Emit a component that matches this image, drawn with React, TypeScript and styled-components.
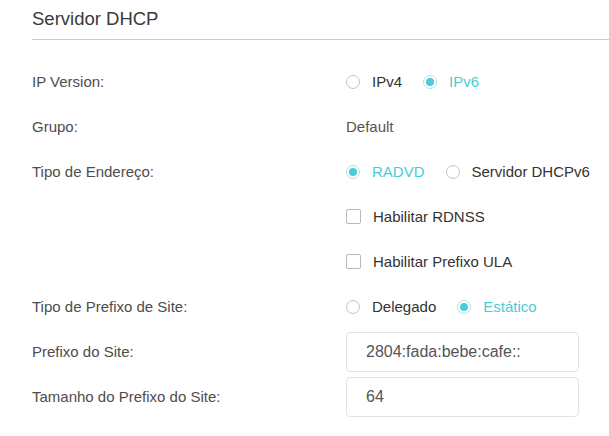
import { useState } from "react";
import styled, { createGlobalStyle } from "styled-components";

const GlobalStyle = createGlobalStyle`
  html, body {
    margin: 0;
    padding: 0;
    background: #ffffff;
    font-family: "Liberation Sans", Arial, sans-serif;
  }
`;

const TEAL = "#4acbd6";

const Panel = styled.section`
  padding-left: 32px;
`;

const Title = styled.h2`
  margin: 0;
  height: 40px;
  box-sizing: border-box;
  padding-top: 8px;
  font-size: 18.5px;
  font-weight: 400;
  color: #3a3a3a;
  border-bottom: 1px solid #cccccc;
`;

const Rows = styled.div`
  padding-top: 19px;
`;

const Row = styled.div`
  display: grid;
  grid-template-columns: 314px 1fr;
  align-items: center;
  height: 45px;
`;

const Label = styled.span`
  font-size: 15px;
  color: #4d4d4d;
`;

const Controls = styled.div`
  display: flex;
  align-items: center;
  gap: 21px;
`;

const Option = styled.label`
  display: inline-flex;
  align-items: center;
  gap: 12px;
  cursor: pointer;
`;

const HiddenInput = styled.input`
  display: none;
`;

const RadioMark = styled.span<{ $checked: boolean }>`
  box-sizing: border-box;
  width: 14px;
  height: 14px;
  border-radius: 50%;
  border: 1px solid ${(p) => (p.$checked ? "#a9e3e8" : "#c4c4c4")};
  display: flex;
  align-items: center;
  justify-content: center;

  &::after {
    content: "";
    width: 8px;
    height: 8px;
    border-radius: 50%;
    background: ${(p) => (p.$checked ? TEAL : "transparent")};
  }
`;

const CheckMark = styled.span<{ $checked: boolean }>`
  box-sizing: border-box;
  width: 15px;
  height: 15px;
  border-radius: 2px;
  border: 1px solid ${(p) => (p.$checked ? TEAL : "#b9b9b9")};
  background: ${(p) => (p.$checked ? TEAL : "#fff")};
`;

const OptionText = styled.span<{ $active?: boolean }>`
  font-size: 15px;
  color: ${(p) => (p.$active ? TEAL : "#333333")};
`;

const Value = styled.span`
  font-size: 15px;
  color: #555555;
`;

const TextField = styled.input`
  box-sizing: border-box;
  width: 233px;
  height: 40px;
  padding: 0 19px;
  border: 1px solid #e3e3e3;
  border-radius: 4px;
  font-family: "Liberation Sans", Arial, sans-serif;
  font-size: 16px;
  color: #555555;
  outline: none;

  &:focus {
    border-color: ${TEAL};
  }
`;

interface RadioGroupProps {
  name: string;
  options: string[];
  value: string;
  onChange: (v: string) => void;
}

function RadioGroup({ name, options, value, onChange }: RadioGroupProps) {
  return (
    <Controls>
      {options.map((opt) => (
        <Option key={opt}>
          <HiddenInput
            type="radio"
            name={name}
            checked={value === opt}
            onChange={() => onChange(opt)}
          />
          <RadioMark $checked={value === opt} />
          <OptionText $active={value === opt}>{opt}</OptionText>
        </Option>
      ))}
    </Controls>
  );
}

interface CheckboxProps {
  label: string;
  checked: boolean;
  onToggle: () => void;
}

function Checkbox({ label, checked, onToggle }: CheckboxProps) {
  return (
    <Option>
      <HiddenInput type="checkbox" checked={checked} onChange={onToggle} />
      <CheckMark $checked={checked} />
      <OptionText>{label}</OptionText>
    </Option>
  );
}

function App() {
  const [ipVersion, setIpVersion] = useState("IPv6");
  const [addrType, setAddrType] = useState("RADVD");
  const [rdnss, setRdnss] = useState(false);
  const [ula, setUla] = useState(false);
  const [prefixType, setPrefixType] = useState("Estático");
  const [prefix, setPrefix] = useState("2804:fada:bebe:cafe::");
  const [prefixLen, setPrefixLen] = useState("64");

  return (
    <>
      <GlobalStyle />
      <Panel>
        <Title>Servidor DHCP</Title>
        <Rows>
          <Row>
            <Label>IP Version:</Label>
            <RadioGroup
              name="ipver"
              options={["IPv4", "IPv6"]}
              value={ipVersion}
              onChange={setIpVersion}
            />
          </Row>
          <Row>
            <Label>Grupo:</Label>
            <Value>Default</Value>
          </Row>
          <Row>
            <Label>Tipo de Endereço:</Label>
            <RadioGroup
              name="addr"
              options={["RADVD", "Servidor DHCPv6"]}
              value={addrType}
              onChange={setAddrType}
            />
          </Row>
          <Row>
            <span />
            <Checkbox
              label="Habilitar RDNSS"
              checked={rdnss}
              onToggle={() => setRdnss(!rdnss)}
            />
          </Row>
          <Row>
            <span />
            <Checkbox
              label="Habilitar Prefixo ULA"
              checked={ula}
              onToggle={() => setUla(!ula)}
            />
          </Row>
          <Row>
            <Label>Tipo de Prefixo de Site:</Label>
            <RadioGroup
              name="prefixtype"
              options={["Delegado", "Estático"]}
              value={prefixType}
              onChange={setPrefixType}
            />
          </Row>
          <Row>
            <Label>Prefixo do Site:</Label>
            <TextField
              value={prefix}
              onChange={(e) => setPrefix(e.target.value)}
            />
          </Row>
          <Row>
            <Label>Tamanho do Prefixo do Site:</Label>
            <TextField
              value={prefixLen}
              onChange={(e) => setPrefixLen(e.target.value)}
            />
          </Row>
        </Rows>
      </Panel>
    </>
  );
}

export default App;
